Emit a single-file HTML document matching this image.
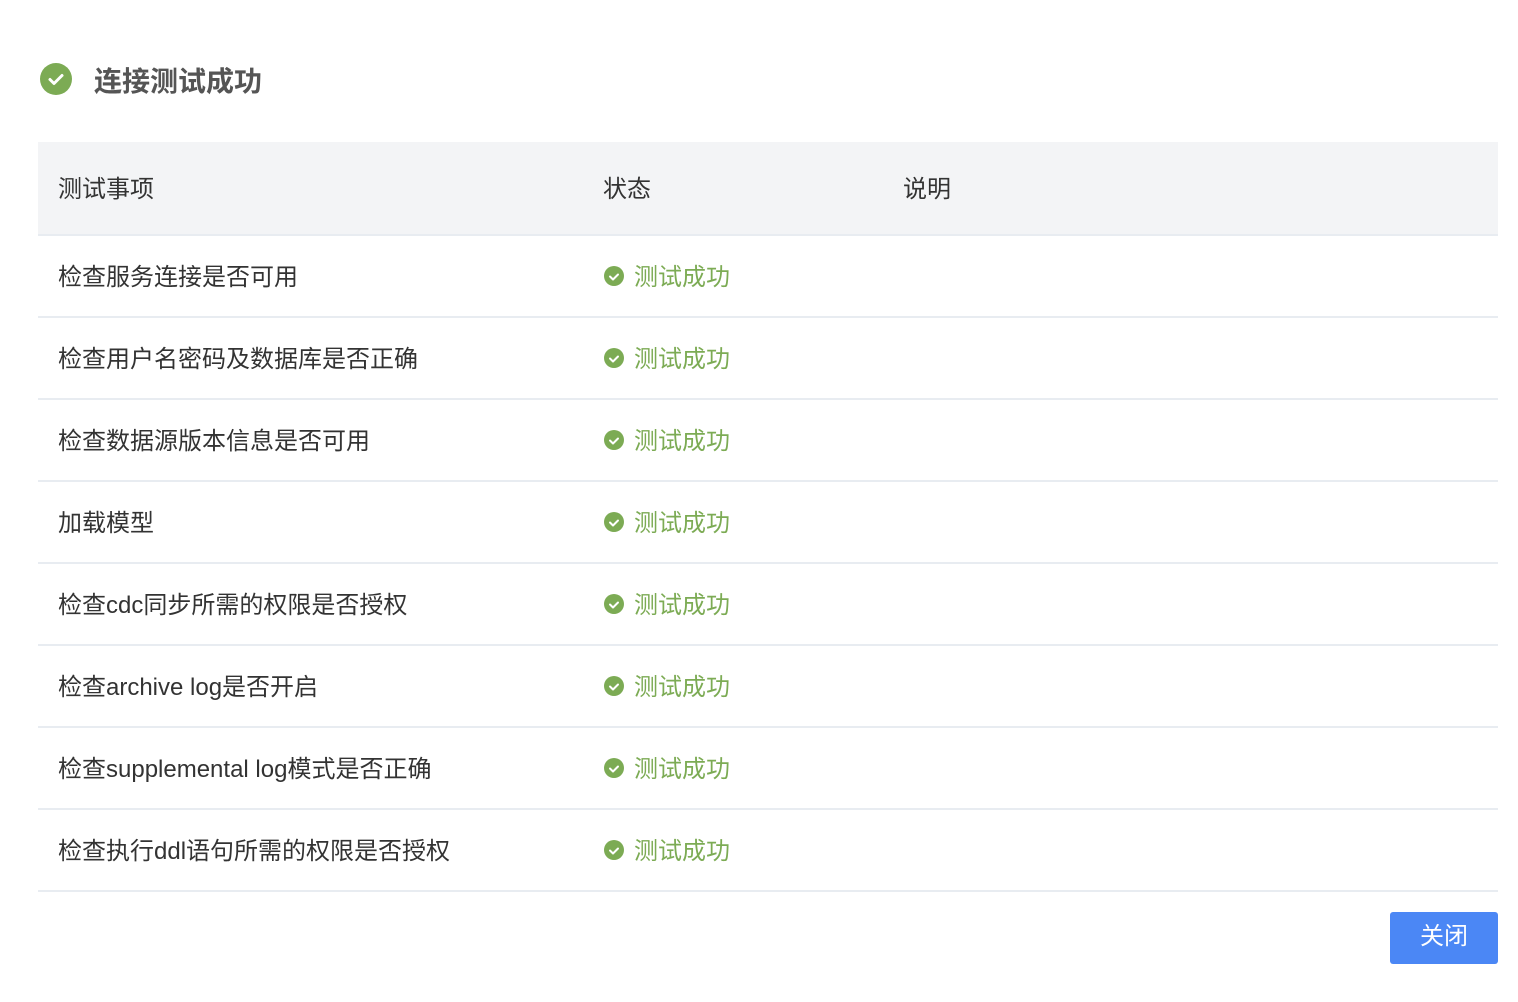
<!DOCTYPE html>
<html><head><meta charset="utf-8"><style>
body{margin:0;width:1518px;height:1002px;background:#fff;font-family:"Liberation Sans","Noto Sans CJK SC",sans-serif;position:relative;overflow:hidden}
.t{position:absolute;left:94px;top:62px;font-size:28px;font-weight:bold;color:#555;line-height:40px}
.ic{position:absolute;left:40px;top:63px}
table{position:absolute;left:38px;top:142px;width:1460px;border-collapse:collapse;font-size:24px;color:#333}
th{background:#f3f4f6;height:88px;font-weight:normal;text-align:left;border-bottom:2px solid #e8ecf1;padding:0 0 4px 0}
td{height:77px;border-bottom:2px solid #e8ecf1;padding:0 0 3px 0}
.c1{padding-left:20px;width:545px}.c2{width:300px}
.ok{color:#7cab54;display:flex;align-items:center}
.ok svg{margin-right:9px;margin-left:0;position:relative;top:1px}
.btn{position:absolute;left:1390px;top:912px;width:108px;height:52px;background:#4b87f5;border-radius:3px;color:#fff;font-size:24px;text-align:center;line-height:50px}
</style></head><body>
<svg class="ic" width="32" height="32" viewBox="0 0 32 32"><circle cx="16" cy="16" r="16" fill="#7cab54"/><path d="M10 16.5l4 4 8-8" stroke="#fff" stroke-width="3" fill="none" stroke-linecap="round" stroke-linejoin="round"/></svg>
<div class="t">连接测试成功</div>
<table>
<tr><th class="c1">测试事项</th><th class="c2">状态</th><th>说明</th></tr>
<tr><td class="c1">检查服务连接是否可用</td><td><span class="ok"><svg width="22" height="22" viewBox="0 0 22 22"><circle cx="11" cy="11" r="10" fill="#7cab54"/><path d="M7 11.5l3 3 5-5" stroke="#fff" stroke-width="2" fill="none" stroke-linecap="round" stroke-linejoin="round"/></svg>测试成功</span></td><td></td></tr>
<tr><td class="c1">检查用户名密码及数据库是否正确</td><td><span class="ok"><svg width="22" height="22" viewBox="0 0 22 22"><circle cx="11" cy="11" r="10" fill="#7cab54"/><path d="M7 11.5l3 3 5-5" stroke="#fff" stroke-width="2" fill="none" stroke-linecap="round" stroke-linejoin="round"/></svg>测试成功</span></td><td></td></tr>
<tr><td class="c1">检查数据源版本信息是否可用</td><td><span class="ok"><svg width="22" height="22" viewBox="0 0 22 22"><circle cx="11" cy="11" r="10" fill="#7cab54"/><path d="M7 11.5l3 3 5-5" stroke="#fff" stroke-width="2" fill="none" stroke-linecap="round" stroke-linejoin="round"/></svg>测试成功</span></td><td></td></tr>
<tr><td class="c1">加载模型</td><td><span class="ok"><svg width="22" height="22" viewBox="0 0 22 22"><circle cx="11" cy="11" r="10" fill="#7cab54"/><path d="M7 11.5l3 3 5-5" stroke="#fff" stroke-width="2" fill="none" stroke-linecap="round" stroke-linejoin="round"/></svg>测试成功</span></td><td></td></tr>
<tr><td class="c1">检查cdc同步所需的权限是否授权</td><td><span class="ok"><svg width="22" height="22" viewBox="0 0 22 22"><circle cx="11" cy="11" r="10" fill="#7cab54"/><path d="M7 11.5l3 3 5-5" stroke="#fff" stroke-width="2" fill="none" stroke-linecap="round" stroke-linejoin="round"/></svg>测试成功</span></td><td></td></tr>
<tr><td class="c1">检查archive log是否开启</td><td><span class="ok"><svg width="22" height="22" viewBox="0 0 22 22"><circle cx="11" cy="11" r="10" fill="#7cab54"/><path d="M7 11.5l3 3 5-5" stroke="#fff" stroke-width="2" fill="none" stroke-linecap="round" stroke-linejoin="round"/></svg>测试成功</span></td><td></td></tr>
<tr><td class="c1">检查supplemental log模式是否正确</td><td><span class="ok"><svg width="22" height="22" viewBox="0 0 22 22"><circle cx="11" cy="11" r="10" fill="#7cab54"/><path d="M7 11.5l3 3 5-5" stroke="#fff" stroke-width="2" fill="none" stroke-linecap="round" stroke-linejoin="round"/></svg>测试成功</span></td><td></td></tr>
<tr><td class="c1">检查执行ddl语句所需的权限是否授权</td><td><span class="ok"><svg width="22" height="22" viewBox="0 0 22 22"><circle cx="11" cy="11" r="10" fill="#7cab54"/><path d="M7 11.5l3 3 5-5" stroke="#fff" stroke-width="2" fill="none" stroke-linecap="round" stroke-linejoin="round"/></svg>测试成功</span></td><td></td></tr>
</table>
<div class="btn">关闭</div>
</body></html>
